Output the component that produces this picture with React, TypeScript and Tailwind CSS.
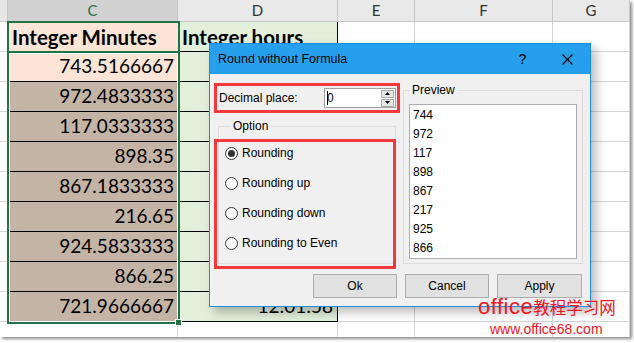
import React from 'react';

const dataRows = [
  { c: '743.5166667', d: '', light: true },
  { c: '972.4833333', d: '' },
  { c: '117.0333333', d: '' },
  { c: '898.35', d: '' },
  { c: '867.1833333', d: '' },
  { c: '216.65', d: '' },
  { c: '924.5833333', d: '' },
  { c: '866.25', d: '' },
  { c: '721.9666667', d: '12:01:58' },
];

const preview = ['744', '972', '117', '898', '867', '217', '925', '866'];

const options = ['Rounding', 'Rounding up', 'Rounding down', 'Rounding to Even'];

function Radio({ label, checked }: { label: string; checked?: boolean }) {
  return (
    <div className="flex h-[30px] items-center gap-[4px]">
      <span className="flex h-[13px] w-[13px] items-center justify-center rounded-full border border-[#333] bg-white">
        {checked && <span className="h-[7px] w-[7px] rounded-full bg-[#333]" />}
      </span>
      <span>{label}</span>
    </div>
  );
}

function Button({ label, wide }: { label: string; wide?: boolean }) {
  return (
    <div
      className={
        wide
          ? 'flex h-[24px] w-[85px] items-center justify-center border border-[#adadad] bg-[#e1e1e1]'
          : 'flex h-[24px] w-[84px] items-center justify-center border border-[#adadad] bg-[#e1e1e1]'
      }
    >
      {label}
    </div>
  );
}

export default function App() {
  return (
    <div className="relative h-[343px] w-[634px] overflow-hidden bg-white font-['Lato',sans-serif] text-black">
      {/* Sheet */}
      <div className="grid w-[630px] grid-cols-[8px_170px_160px_77px_138px_77px] grid-rows-[22px_repeat(10,30px)_15px] shadow-[2px_2px_3px_rgba(0,0,0,0.45)]">
        {/* Column headers */}
        <div className="border-b border-r border-[#c6c6c6] bg-[#e6e6e6]" />
        <div className="flex items-center justify-center border-b border-r border-[#c6c6c6] bg-[#d2d2d2] text-[15px] text-[#217346]">
          C
        </div>
        {['D', 'E', 'F', 'G'].map((l) => (
          <div
            key={l}
            className="flex items-center justify-center border-b border-r border-[#c6c6c6] bg-[#e9e9e9] text-[15px] text-[#333]"
          >
            {l}
          </div>
        ))}

        {/* Title row */}
        <div className="border-b border-[#d4d4d4] bg-white" />
        <div className="flex items-center border-b border-black bg-[#fce4d6] pl-[4px] pt-[2px] text-[20.5px] font-bold">
          Integer Minutes
        </div>
        <div className="flex items-center border-b border-r border-black bg-[#e2efda] pl-[4px] pt-[2px] text-[20.5px] font-bold">
          Integer hours
        </div>
        <div className="border-b border-r border-[#d4d4d4]" />
        <div className="border-b border-r border-[#d4d4d4]" />
        <div className="border-b border-r border-[#d4d4d4]" />

        {/* Data rows */}
        {dataRows.map((row, i) => (
          <React.Fragment key={i}>
            <div className="border-b border-[#d4d4d4] bg-white" />
            <div
              className={
                row.light
                  ? 'flex items-center justify-end border-b border-black bg-[#fce4d6] pr-[4px] text-[19px]'
                  : 'flex items-center justify-end border-b border-black bg-[#c4b4a6] pr-[4px] text-[19px]'
              }
            >
              {row.c}
            </div>
            <div className="flex items-center justify-end border-b border-r border-black bg-[#e2efda] pr-[4px] text-[19px]">
              {row.d}
            </div>
            <div className="border-b border-r border-[#d4d4d4]" />
            <div className="border-b border-r border-[#d4d4d4]" />
            <div className="border-b border-r border-[#d4d4d4]" />
          </React.Fragment>
        ))}

        {/* Partial last row */}
        <div className="bg-white" />
        <div className="border-r border-[#d4d4d4]" />
        <div className="border-r border-[#d4d4d4]" />
        <div className="border-r border-[#d4d4d4]" />
        <div className="border-r border-[#d4d4d4]" />
        <div className="border-r border-[#d4d4d4]" />
      </div>

      {/* Selection */}
      <div className="pointer-events-none absolute left-[7px] top-[21px] h-[303px] w-[173px] border-2 border-[#217346]" />
      <div className="pointer-events-none absolute left-[7px] top-[51px] h-[2px] w-[173px] bg-[#217346]" />
      <div className="pointer-events-none absolute left-[9px] top-[53px] h-[269px] w-[169px] border border-white" />
      <div className="absolute left-[175px] top-[319px] h-[7px] w-[7px] border border-white bg-[#217346]" />

      {/* Dialog */}
      <div className="absolute left-[209px] top-[43px] flex h-[264px] w-[382px] flex-col border border-[#1a8ee3] bg-[#f0f0f0] font-['Liberation_Sans',sans-serif] text-[12px] shadow-[5px_5px_10px_rgba(0,0,0,0.28)]">
        <div className="flex h-[30px] shrink-0 items-center bg-[#26a0ec] pl-[8px] text-[12.5px]">
          <span>Round without Formula</span>
          <span className="ml-auto w-[45px] text-center text-[14px]">?</span>
          <span className="flex w-[45px] justify-center">
            <svg width="11" height="11" viewBox="0 0 11 11" fill="none" stroke="#000" strokeWidth="1.1">
              <path d="M0.5 0.5 L10.5 10.5 M10.5 0.5 L0.5 10.5" />
            </svg>
          </span>
        </div>

        <div className="flex flex-col px-[4px] pt-[8px]">
          <div className="flex gap-[3px]">
            {/* Left column */}
            <div className="relative w-[186px] pt-[1px]">
              <div className="flex h-[30px] items-center border-[3px] border-[#f5383c] pl-[2px] pr-px">
                <span>Decimal place:</span>
                <div className="ml-auto flex h-[20px] w-[72px] items-center border border-[#a0a0a0] bg-white">
                  <span className="ml-[2px] h-[14px] w-px bg-black" />
                  <span className="ml-[-1px]">0</span>
                  <div className="ml-auto mr-[1px] flex flex-col gap-px">
                    <div className="flex h-[8px] w-[13px] items-center justify-center border border-[#acacac] bg-[#e6e6e6]">
                      <svg width="5" height="3" viewBox="0 0 5 3">
                        <path d="M0 3 L2.5 0 L5 3 Z" fill="#000" />
                      </svg>
                    </div>
                    <div className="flex h-[8px] w-[13px] items-center justify-center border border-[#acacac] bg-[#e6e6e6]">
                      <svg width="5" height="3" viewBox="0 0 5 3">
                        <path d="M0 0 L2.5 3 L5 0 Z" fill="#000" />
                      </svg>
                    </div>
                  </div>
                </div>
              </div>

              <fieldset className="ml-[4px] mt-[5px] h-[146px] w-[178px] border border-[#dcdcdc] pl-[6px]">
                <legend className="ml-[6px] px-[2px] leading-[16px]">Option</legend>
                <div className="pt-[4px]">
                  {options.map((o, i) => (
                    <Radio key={o} label={o} checked={i === 0} />
                  ))}
                </div>
              </fieldset>

              <div className="pointer-events-none absolute left-0 top-[57px] h-[130px] w-[182px] border-[3px] border-[#f5383c]" />
            </div>

            {/* Right column */}
            <fieldset className="h-[182px] w-[180px] border border-[#dcdcdc]">
              <legend className="ml-[6px] px-[2px] leading-[16px]">Preview</legend>
              <div className="ml-[5px] mt-[6px] h-[155px] w-[168px] border border-[#abadb3] bg-white pl-[3px] pt-px">
                {preview.map((p) => (
                  <div key={p} className="leading-[19px]">
                    {p}
                  </div>
                ))}
              </div>
            </fieldset>
          </div>

          <div className="mt-[10px] flex justify-end gap-[8px] pr-[4px]">
            <Button label="Ok" />
            <Button label="Cancel" />
            <Button label="Apply" wide />
          </div>
        </div>
      </div>

      {/* Watermark */}
      <div className="pointer-events-none absolute left-[478px] top-[296px] flex items-baseline font-['Liberation_Sans','Noto_Sans_CJK_SC',sans-serif] leading-none text-[#f2141e]">
        <span className="text-[22px] tracking-[0.5px]">office</span>
        <span className="text-[16.5px]">教程学习网</span>
      </div>
      <div className="pointer-events-none absolute left-[490px] top-[322px] font-['Liberation_Sans',sans-serif] text-[14px] leading-none text-[#f2141e]">
        www.office68.com
      </div>
    </div>
  );
}
